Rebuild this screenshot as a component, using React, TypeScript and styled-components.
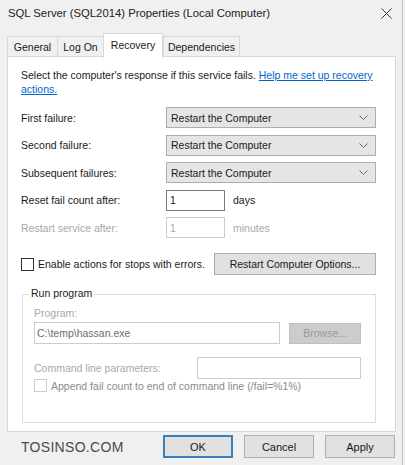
import styled, { createGlobalStyle } from "styled-components";

const GlobalStyle = createGlobalStyle`
  html, body {
    margin: 0;
    padding: 0;
    background: #f0f0f0;
  }
  * {
    box-sizing: border-box;
  }
`;

const failureRows = [
  { label: "First failure:", value: "Restart the Computer" },
  { label: "Second failure:", value: "Restart the Computer" },
  { label: "Subsequent failures:", value: "Restart the Computer" },
];

const tabs = [
  { name: "General", width: 50 },
  { name: "Log On", width: 46 },
  { name: "Recovery", width: 60 },
  { name: "Dependencies", width: 77 },
];

const Chevron = () => (
  <svg width="9" height="5" viewBox="0 0 9 5">
    <path d="M0.5 0.5 L4.5 4.5 L8.5 0.5" fill="none" stroke="#6a6a6a" strokeWidth="1" />
  </svg>
);

const CloseIcon = () => (
  <svg width="11" height="11" viewBox="0 0 11 11">
    <path d="M0.5 0.5 L10.5 10.5 M10.5 0.5 L0.5 10.5" stroke="#333" strokeWidth="1" />
  </svg>
);

export default function App() {
  return (
    <>
      <GlobalStyle />
      <Window>
        <TitleBar>
          <Title>SQL Server (SQL2014) Properties (Local Computer)</Title>
          <CloseIcon />
        </TitleBar>
        <TabStrip>
          {tabs.map((t) => (
            <Tab key={t.name} $active={t.name === "Recovery"} $width={t.width}>
              {t.name}
            </Tab>
          ))}
        </TabStrip>
        <Panel>
          <Intro>
            Select the computer's response if this service fails.{" "}
            <LinkText>Help me set up recovery actions.</LinkText>
          </Intro>
          <FormGrid>
            {failureRows.map((r) => (
              <Row key={r.label}>
                <Label>{r.label}</Label>
                <Select>
                  <span>{r.value}</span>
                  <Chevron />
                </Select>
              </Row>
            ))}
            <Row>
              <Label>Reset fail count after:</Label>
              <InlineField>
                <NumberBox $disabled={false}>1</NumberBox>
                <Unit $disabled={false}>days</Unit>
              </InlineField>
            </Row>
            <Row>
              <Label $disabled>Restart service after:</Label>
              <InlineField>
                <NumberBox $disabled>1</NumberBox>
                <Unit $disabled>minutes</Unit>
              </InlineField>
            </Row>
          </FormGrid>
          <ActionRow>
            <CheckLabel>
              <CheckBox $disabled={false} />
              <span>Enable actions for stops with errors.</span>
            </CheckLabel>
            <OptionsButton>Restart Computer Options...</OptionsButton>
          </ActionRow>
          <GroupBox>
            <Legend>Run program</Legend>
            <DimText>Program:</DimText>
            <ProgramRow>
              <TextBox $width={247}>C:\temp\hassan.exe</TextBox>
              <BrowseButton>Browse...</BrowseButton>
            </ProgramRow>
            <ParamsRow>
              <DimText>Command line parameters:</DimText>
              <TextBox $width={164} />
            </ParamsRow>
            <CheckLabel $disabled>
              <CheckBox $disabled />
              <span>Append fail count to end of command line (/fail=%1%)</span>
            </CheckLabel>
          </GroupBox>
        </Panel>
        <Footer>
          <Brand>TOSINSO.COM</Brand>
          <Buttons>
            <DialogButton $focused>OK</DialogButton>
            <DialogButton>Cancel</DialogButton>
            <DialogButton>Apply</DialogButton>
          </Buttons>
        </Footer>
      </Window>
    </>
  );
}

const Window = styled.div`
  width: 403px;
  height: 465px;
  background: #f0f0f0;
  border-right: 1px solid #c4c4c4;
  font-family: "Liberation Sans", Arial, sans-serif;
  font-size: 10.5px;
  color: #1a1a1a;
  display: flex;
  flex-direction: column;
`;

const TitleBar = styled.div`
  height: 30px;
  display: flex;
  align-items: center;
  justify-content: space-between;
  padding: 0 10px 4px 8px;
`;

const Title = styled.div`
  font-size: 11.3px;
  color: #222;
`;

const TabStrip = styled.div`
  display: flex;
  align-items: flex-end;
  height: 27px;
  padding-left: 7px;
  position: relative;
  z-index: 1;
`;

const Tab = styled.div<{ $active: boolean; $width: number }>`
  width: ${(p) => p.$width}px;
  height: ${(p) => (p.$active ? "25px" : "21px")};
  padding-bottom: ${(p) => (p.$active ? "3px" : "0")};
  display: flex;
  align-items: center;
  justify-content: center;
  font-size: 10.5px;
  background: ${(p) => (p.$active ? "#ffffff" : "#f0f0f0")};
  border: 1px solid #d9d9d9;
  border-bottom: ${(p) => (p.$active ? "none" : "1px solid #d9d9d9")};
  border-right: ${(p) => (p.$active ? "1px solid #d9d9d9" : "none")};
  margin-bottom: ${(p) => (p.$active ? "-1px" : "0")};
  position: relative;
  z-index: ${(p) => (p.$active ? 2 : 1)};
  &:last-child {
    border-right: 1px solid #d9d9d9;
  }
`;

const Panel = styled.div`
  margin: -1px 6px 0 7px;
  height: 376px;
  background: #ffffff;
  border: 1px solid #d9d9d9;
  padding: 11px 19px 0 13px;
  display: flex;
  flex-direction: column;
`;

const Intro = styled.div`
  line-height: 14px;
`;

const LinkText = styled.span`
  color: #0066cc;
  text-decoration: underline;
`;

const FormGrid = styled.div`
  margin-top: 11px;
  display: flex;
  flex-direction: column;
  gap: 6.5px;
`;

const Row = styled.div`
  display: grid;
  grid-template-columns: 145px 1fr;
  align-items: center;
  height: 21px;
`;

const Label = styled.div<{ $disabled?: boolean }>`
  color: ${(p) => (p.$disabled ? "#a8a8a8" : "#1a1a1a")};
`;

const Select = styled.div`
  height: 21px;
  background: #e5e5e5;
  border: 1px solid #adadad;
  display: flex;
  align-items: center;
  justify-content: space-between;
  padding: 0 7px 0 4px;
`;

const InlineField = styled.div`
  display: flex;
  align-items: center;
  gap: 8px;
`;

const NumberBox = styled.div<{ $disabled: boolean }>`
  width: 59px;
  height: 21px;
  border: 1px solid ${(p) => (p.$disabled ? "#cccccc" : "#7a7a7a")};
  background: #fff;
  color: ${(p) => (p.$disabled ? "#a8a8a8" : "#1a1a1a")};
  display: flex;
  align-items: center;
  padding-left: 3px;
`;

const Unit = styled.span<{ $disabled: boolean }>`
  color: ${(p) => (p.$disabled ? "#a8a8a8" : "#1a1a1a")};
`;

const ActionRow = styled.div`
  margin-top: 15px;
  display: flex;
  align-items: center;
  justify-content: space-between;
  height: 22px;
`;

const CheckLabel = styled.div<{ $disabled?: boolean }>`
  display: flex;
  align-items: center;
  gap: 4px;
  color: ${(p) => (p.$disabled ? "#8a8a8a" : "#1a1a1a")};
`;

const CheckBox = styled.div<{ $disabled: boolean }>`
  width: 13px;
  height: 13px;
  border: 1px solid ${(p) => (p.$disabled ? "#cccccc" : "#333333")};
  background: #fff;
`;

const OptionsButton = styled.div`
  width: 162px;
  height: 22px;
  background: #e1e1e1;
  border: 1px solid #adadad;
  display: flex;
  align-items: center;
  justify-content: center;
`;

const GroupBox = styled.div`
  margin-top: 19px;
  margin-left: 1px;
  height: 129px;
  border: 1px solid #dcdcdc;
  padding: 12px 14px 0 11px;
  display: flex;
  flex-direction: column;
  position: relative;
`;

const Legend = styled.span`
  position: absolute;
  top: -8px;
  left: 6px;
  padding: 0 2px;
  background: #fff;
  color: #1a1a1a;
`;

const DimText = styled.div`
  color: #a8a8a8;
`;

const ProgramRow = styled.div`
  margin-top: 3px;
  display: flex;
  align-items: center;
  gap: 9px;
`;

const TextBox = styled.div<{ $width: number }>`
  width: ${(p) => p.$width}px;
  height: 22px;
  border: 1px solid #cccccc;
  background: #fff;
  color: #6d6d6d;
  display: flex;
  align-items: center;
  padding-left: 2px;
`;

const BrowseButton = styled.div`
  width: 72px;
  height: 21px;
  background: #cccccc;
  border: 1px solid #bfbfbf;
  color: #9a9a9a;
  display: flex;
  align-items: center;
  justify-content: center;
`;

const ParamsRow = styled.div`
  margin-top: 13px;
  display: flex;
  align-items: center;
  justify-content: space-between;
`;

const Footer = styled.div`
  height: 31px;
  display: flex;
  align-items: center;
  justify-content: space-between;
  padding: 0 7px 2px 21px;
`;

const Brand = styled.div`
  font-size: 14px;
  color: #4a4a4a;
  letter-spacing: 0.3px;
`;

const Buttons = styled.div`
  display: flex;
  gap: 11px;
`;

const DialogButton = styled.div<{ $focused?: boolean }>`
  width: 70px;
  height: 23px;
  background: #e1e1e1;
  border: ${(p) => (p.$focused ? "2px solid #3b7fb8" : "1px solid #adadad")};
  display: flex;
  align-items: center;
  justify-content: center;
  font-size: 11px;
`;
